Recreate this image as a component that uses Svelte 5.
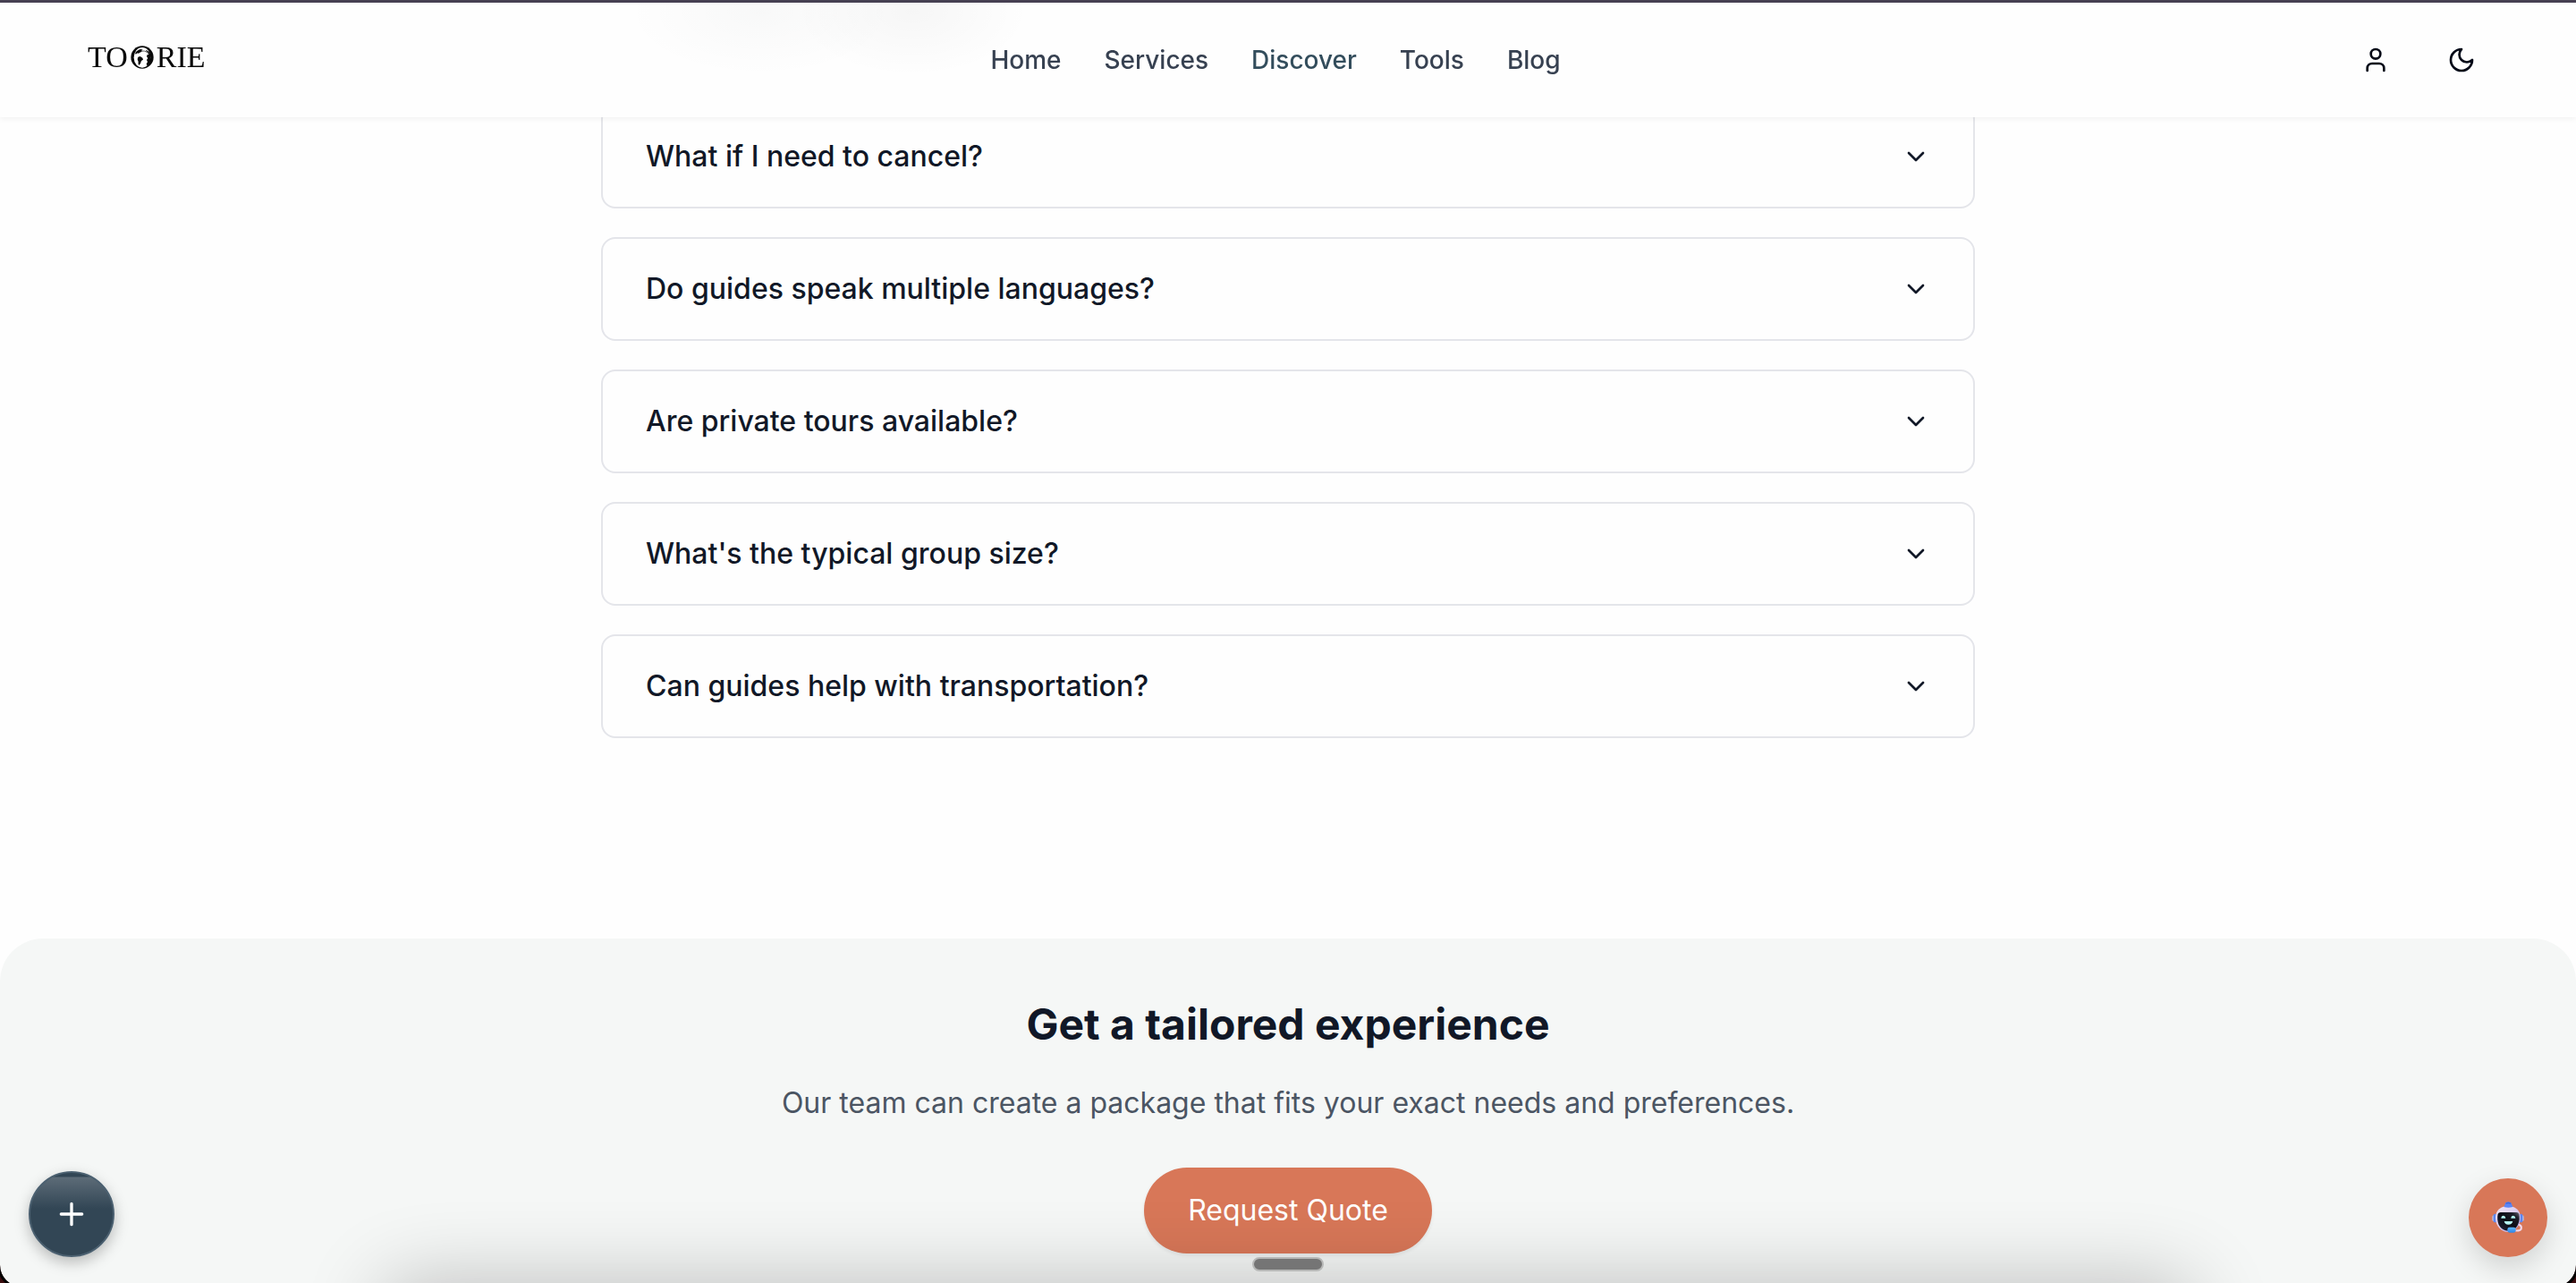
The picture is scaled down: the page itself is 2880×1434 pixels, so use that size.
<script>
  const links = [
    { label: 'Home', href: '#home' },
    { label: 'Services', href: '#services' },
    { label: 'Discover', href: '#discover', active: true },
    { label: 'Tools', href: '#tools' },
    { label: 'Blog', href: '#blog' }
  ];

  const questions = [
    'What if I need to cancel?',
    'Do guides speak multiple languages?',
    'Are private tours available?',
    "What's the typical group size?",
    'Can guides help with transportation?'
  ];
</script>

<div class="page">
  <header class="header">
    <div class="haze" aria-hidden="true"></div>
    <a class="logo" href="#home" aria-label="Toorie">
      <span>TO</span>
      <svg class="globe" viewBox="0 0 78 78" aria-hidden="true">
        <circle cx="39" cy="39" r="38" fill="#0a0a0a" />
        <ellipse cx="39" cy="40" rx="28" ry="34" fill="#fff" />
        <path fill="#0a0a0a" d="M16 24 Q24 13 35 12 L41 14 L35 18 L38 20 L31 23 L27 26 L22 25 L18 29Z" />
        <path fill="#0a0a0a" d="M25 38 L32 36 L40 41 L42 47 L36 51 L33 60 L28 66 Q24 60 26 54 L23 46Z" />
        <path fill="#0a0a0a" d="M52 14 Q63 19 68 30 L68 53 Q64 65 56 68 L53 61 L57 55 L54 48 L58 42 L54 37 L56 30 L62 29 Q59 21 52 18Z" />
        <path fill="none" stroke="#0a0a0a" stroke-width="2" d="M14 28 Q30 15 46 18 Q57 21 62 29" />
      </svg>
      <span>RIE</span>
    </a>
    <nav class="nav" aria-label="Main">
      {#each links as link}
        <a href={link.href} class:active={link.active}>{link.label}</a>
      {/each}
    </nav>
    <div class="actions">
      <button type="button" aria-label="Account">
        <svg class="icon" viewBox="0 0 24 24" aria-hidden="true">
          <path d="M19 21v-2a4 4 0 0 0-4-4H9a4 4 0 0 0-4 4v2" />
          <circle cx="12" cy="7" r="4" />
        </svg>
      </button>
      <button type="button" aria-label="Dark mode">
        <svg class="icon" viewBox="0 0 24 24" aria-hidden="true">
          <path d="M12 3a6 6 0 0 0 9 9 9 9 0 1 1-9-9Z" />
        </svg>
      </button>
    </div>
  </header>

  <main>
    <section class="faq" aria-label="Questions">
      {#each questions as question}
        <button type="button" class="question" aria-expanded="false">
          <span>{question}</span>
          <svg class="icon" viewBox="0 0 24 24" aria-hidden="true"><path d="m6 9 6 6 6-6" /></svg>
        </button>
      {/each}
    </section>

    <section class="cta">
      <h2>Get a tailored experience</h2>
      <p>Our team can create a package that fits your exact needs and preferences.</p>
      <button type="button" class="quote">Request Quote</button>
    </section>
  </main>

  <div class="dock-shadow" aria-hidden="true"></div>
  <div class="handle" aria-hidden="true"></div>

  <button type="button" class="fab add" aria-label="Add">
    <svg viewBox="0 0 24 24" aria-hidden="true"><path d="M5 12h14M12 5v14" /></svg>
  </button>

  <button type="button" class="fab bot" aria-label="Chat assistant">
    <svg viewBox="0 0 108 108" aria-hidden="true">
      <defs>
        <linearGradient id="shell" x1="0" y1="0" x2="1" y2="1">
          <stop offset="0" stop-color="#efe6f6" />
          <stop offset="0.5" stop-color="#dccdf0" />
          <stop offset="1" stop-color="#a99add" />
        </linearGradient>
        <linearGradient id="visor" x1="0" y1="1" x2="1" y2="0">
          <stop offset="0" stop-color="#23253c" />
          <stop offset="0.5" stop-color="#0b0c16" />
          <stop offset="0.8" stop-color="#1c1c28" />
          <stop offset="1" stop-color="#6a6674" />
        </linearGradient>
        <linearGradient id="mic" x1="0" y1="0" x2="0" y2="1">
          <stop offset="0" stop-color="#5fb8fb" />
          <stop offset="1" stop-color="#2e86ea" />
        </linearGradient>
      </defs>
      <rect x="1" y="46" width="10" height="20" rx="5" fill="#b9bfe0" />
      <rect x="97" y="46" width="10" height="20" rx="5" fill="#b9bfe0" />
      <rect x="5" y="41" width="12" height="29" rx="5" fill="#5f86ee" />
      <rect x="91" y="41" width="12" height="29" rx="5" fill="#5f86ee" />
      <path d="M12 54 C12 28 32 15 54 15 C76 15 96 28 96 54 C96 83 76 102 54 102 C32 102 12 83 12 54Z" fill="url(#shell)" />
      <path d="M46 4 Q55 -2 64 4 L70 18 Q55 22 40 18Z" fill="#5a86f7" />
      <path d="M47 4 Q55 0 63 4 L64 8 Q55 5 46 8Z" fill="#3f66d8" />
      <path d="M20 41 Q23 35 31 36 H80 Q89 35 91 42 Q95 60 87 78 Q77 98 55 98 Q34 98 23 78 Q16 60 20 41Z" fill="url(#visor)" />
      <path d="M31 56 Q31 47 39 47 Q46 48 46 56Z" fill="#b5f5f3" />
      <path d="M64 56 Q64 47 72 47 Q79 48 79 56Z" fill="#b5f5f3" />
      <path d="M41 66 H70 Q68 77 55 77 Q43 77 41 66Z" fill="#b5f5f3" />
      <path d="M92 78 Q101 82 98 92 Q94 99 76 97" fill="none" stroke="#f0d8ec" stroke-width="6" stroke-linecap="round" />
      <rect x="52" y="86" width="28" height="18" rx="7" fill="url(#mic)" />
    </svg>
  </button>

  <div class="frame" aria-hidden="true"></div>
</div>

<style>
  :global(body) {
    background: #fefefe;
    overflow: hidden;
  }

  .page {
    min-height: 100vh;
    display: flex;
    flex-direction: column;
    font-family: Inter, 'Liberation Sans', sans-serif;
    color: #111827;
  }

  button {
    border: 0;
    padding: 0;
    margin: 0;
    background: none;
    color: inherit;
    font: inherit;
    cursor: pointer;
  }

  .icon {
    width: 32px;
    height: 32px;
    flex: none;
    fill: none;
    stroke: currentColor;
    stroke-width: 2;
    stroke-linecap: round;
    stroke-linejoin: round;
  }

  .header {
    position: fixed;
    inset: 0 0 auto;
    z-index: 2;
    box-sizing: border-box;
    height: 131px;
    padding: 0 88px;
    border-top: 3px solid #464052;
    display: flex;
    align-items: center;
    justify-content: space-between;
    background: #fefefe;
    box-shadow: 0 2px 6px rgba(0, 0, 0, 0.05);
  }

  .haze {
    position: absolute;
    top: 0;
    left: 660px;
    width: 500px;
    height: 90px;
    background:
      radial-gradient(ellipse 150px 72px at 190px 10px, rgba(0, 20, 20, 0.025), transparent),
      radial-gradient(ellipse 130px 72px at 360px 10px, rgba(0, 0, 0, 0.03), transparent);
  }

  .logo {
    position: relative;
    box-sizing: border-box;
    width: 148px;
    padding: 0 0 6px 10px;
    display: flex;
    align-items: center;
    gap: 3px;
    font: 34px/40px 'Liberation Serif', serif;
    color: #0a0a0a;
    text-decoration: none;
  }

  .globe {
    width: 26px;
    height: 26px;
    flex: none;
  }

  .nav {
    position: relative;
    display: flex;
    gap: 48px;
    font-size: 28px;
    line-height: 40px;
    font-weight: 500;
  }

  .nav a {
    color: #374151;
    text-decoration: none;
  }

  .nav a.active {
    color: #334d5c;
  }

  .actions {
    display: flex;
    gap: 16px;
    color: #020817;
  }

  .actions button {
    width: 80px;
    height: 80px;
    display: grid;
    place-items: center;
  }

  main {
    flex: 1;
    padding-top: 117px;
    display: flex;
    flex-direction: column;
    gap: 224px;
  }

  .faq {
    width: 100%;
    max-width: 1536px;
    margin: 0 auto;
    display: flex;
    flex-direction: column;
    gap: 32px;
  }

  .question {
    box-sizing: border-box;
    min-height: 116px;
    padding: 32px 48px;
    border: 2px solid #e4e5ea;
    border-radius: 16px;
    display: flex;
    align-items: center;
    justify-content: space-between;
    text-align: left;
    font-size: 32px;
    line-height: 48px;
    font-weight: 500;
  }

  .cta {
    flex: 1;
    padding: 64px 48px 96px;
    border-radius: 48px 48px 0 0;
    display: flex;
    flex-direction: column;
    align-items: center;
    background: #f5f7f6;
    text-align: center;
  }

  h2 {
    margin: 0 0 32px;
    font-size: 48px;
    line-height: 64px;
    font-weight: 700;
  }

  p {
    margin: 0 0 48px;
    font-size: 32px;
    line-height: 48px;
    color: #4b5563;
  }

  .quote {
    height: 96px;
    padding: 0 49px;
    border-radius: 48px;
    background: #d87758;
    color: #fff;
    font-size: 32px;
    line-height: 48px;
    box-shadow: 0 2px 4px rgba(0, 0, 0, 0.08);
  }

  .dock-shadow {
    position: fixed;
    top: 100%;
    left: 430px;
    right: 430px;
    height: 200px;
    border-radius: 20px;
    box-shadow: 0 0 90px rgba(0, 0, 0, 0.24);
    pointer-events: none;
  }

  .handle {
    position: fixed;
    bottom: 13px;
    left: 0;
    right: 0;
    margin: 0 auto;
    box-sizing: border-box;
    width: 80px;
    height: 16px;
    border: 2px solid #b7b8b7;
    border-radius: 8px;
    background: #757575;
  }

  .fab {
    position: fixed;
    bottom: 29px;
    display: grid;
    place-items: center;
    border-radius: 50%;
  }

  .add {
    left: 32px;
    width: 96px;
    height: 96px;
    border: 2px solid #4b6070;
    background: linear-gradient(#324655 4px, #5c6b77 5px, #324655 40px);
    box-shadow: 0 6px 16px rgba(0, 0, 0, 0.25);
  }

  .add svg {
    width: 40px;
    height: 40px;
    stroke: #fff;
    stroke-width: 2;
    stroke-linecap: round;
  }

  .bot {
    right: 32px;
    width: 88px;
    height: 88px;
    background: #d87758;
    box-shadow: 0 12px 32px rgba(0, 0, 0, 0.15);
  }

  .bot svg {
    width: 36px;
    height: 36px;
  }

  .frame {
    position: fixed;
    inset: 0 0 -4px;
    z-index: 3;
    border-radius: 0 0 24px 24px;
    box-shadow:
      0 0 0 3px #000,
      0 0 0 24px #3a0d0f;
    pointer-events: none;
  }
</style>
